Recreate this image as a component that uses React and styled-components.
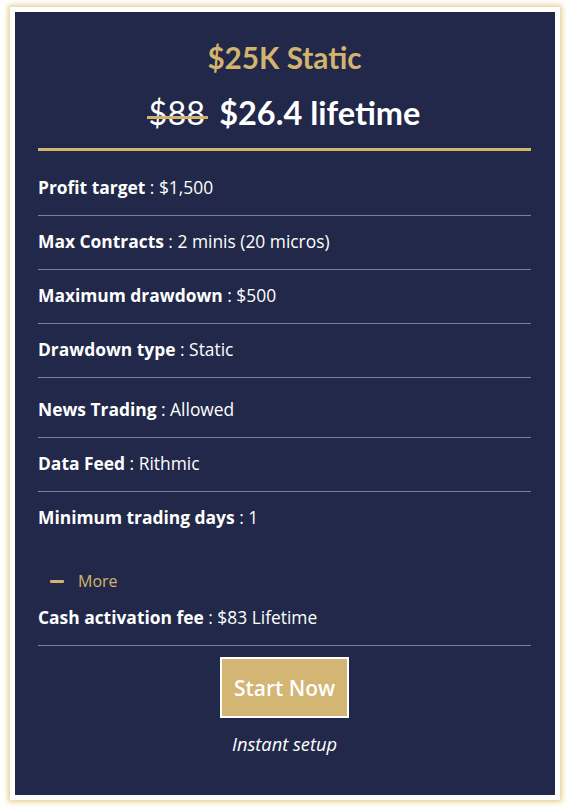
import React from "react";
import styled, { createGlobalStyle } from "styled-components";

const Global = createGlobalStyle`
  html, body { margin: 0; padding: 0; background: #ffffff; }
  body { font-family: "Open Sans", "Liberation Sans", sans-serif; }
`;

const Page = styled.div`
  padding: 7px 14px 10px 10px;
`;

const Card = styled.div`
  box-sizing: content-box;
  width: 493px;
  border: 5px solid #ffffff;
  background: #222849;
  box-shadow: 0 0 5px 2px rgba(222, 192, 110, 0.75);
  padding: 29px 24px 39px 23px;
`;

const Title = styled.h2`
  margin: 0;
  text-align: center;
  font-family: Lato, "Liberation Sans", sans-serif;
  font-weight: 700;
  font-size: 29.7px;
  line-height: 34px;
  color: #d3b46f;
`;

const PriceLine = styled.div`
  margin-top: 20px;
  display: flex;
  justify-content: center;
  align-items: baseline;
  gap: 14px;
  font-family: Lato, "Liberation Sans", sans-serif;
  font-size: 32.5px;
  line-height: 36px;
  color: #ffffff;
`;

const OldPrice = styled.span`
  position: relative;
  font-weight: 400;
  &::after {
    content: "";
    position: absolute;
    left: -2px;
    right: -3px;
    top: 57%;
    height: 3px;
    background: #d3b46f;
  }
`;

const NewPrice = styled.span`
  font-weight: 700;
`;

const GoldRule = styled.div`
  margin-top: 17px;
  height: 3px;
  background: #d3b46f;
`;

const List = styled.ul`
  list-style: none;
  margin: ${(p) => p.$top}px 0 0;
  padding: 0;
`;

const Item = styled.li`
  padding: ${(p) => p.$pt ?? 13}px 0 16px;
  font-size: 17.4px;
  line-height: 24px;
  color: #ffffff;
  border-bottom: ${(p) => (p.$noLine ? "none" : "1px solid #7d8196")};
`;

const Label = styled.strong`
  font-weight: 700;
`;

const MoreToggle = styled.div`
  display: flex;
  align-items: center;
  gap: 14px;
  margin-top: 24px;
  padding-left: 12px;
  font-size: 16px;
  line-height: 24px;
  color: #d3b46f;
`;

const Dash = styled.span`
  display: block;
  width: 14px;
  height: 3px;
  background: #d3b46f;
  border-radius: 1px;
`;

const ButtonRow = styled.div`
  display: flex;
  justify-content: center;
  margin-top: 11px;
`;

const StartButton = styled.button`
  width: 129px;
  height: 61px;
  border: 2px solid #ffffff;
  background: #d3b574;
  color: #ffffff;
  font-family: "Open Sans", "Liberation Sans", sans-serif;
  font-weight: 600;
  font-size: 21px;
  cursor: pointer;
  padding: 0;
`;

const Note = styled.p`
  margin: 14px 0 0;
  text-align: center;
  font-style: italic;
  font-size: 18.3px;
  line-height: 24px;
  color: #ffffff;
`;

const group1 = [
  ["Profit target", "$1,500"],
  ["Max Contracts", "2 minis (20 micros)"],
  ["Maximum drawdown", "$500"],
  ["Drawdown type", "Static"],
];
const group2 = [
  ["News Trading", "Allowed"],
  ["Data Feed", "Rithmic"],
  ["Minimum trading days", "1"],
];

export default function App() {
  return (
    <>
      <Global />
      <Page>
        <Card>
          <Title>$25K Static</Title>
          <PriceLine>
            <OldPrice>$88</OldPrice>
            <NewPrice>$26.4 lifetime</NewPrice>
          </PriceLine>
          <GoldRule />
          <List $top={11}>
            {group1.map(([k, v]) => (
              <Item key={k}>
                <Label>{k}</Label> : {v}
              </Item>
            ))}
          </List>
          <List $top={0}>
            {group2.map(([k, v], i) => (
              <Item key={k} $pt={i === 0 ? 19 : 13} $noLine={i === group2.length - 1}>
                <Label>{k}</Label> : {v}
              </Item>
            ))}
          </List>
          <MoreToggle>
            <Dash />
            More
          </MoreToggle>
          <List $top={0}>
            <Item $pt={12}>
              <Label>Cash activation fee</Label> : $83 Lifetime
            </Item>
          </List>
          <ButtonRow>
            <StartButton>Start Now</StartButton>
          </ButtonRow>
          <Note>Instant setup</Note>
        </Card>
      </Page>
    </>
  );
}
